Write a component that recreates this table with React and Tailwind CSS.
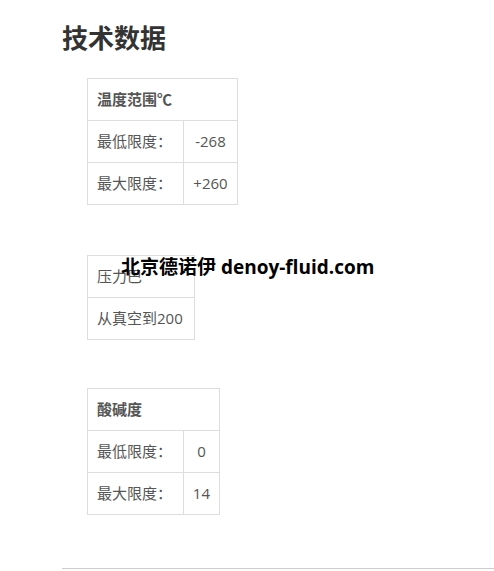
export default function App() {
  const cell = "border border-[#dddddd] h-[42px] px-[9px] text-[15px] text-[#555555] whitespace-nowrap";
  return (
    <div className="relative w-[494px] h-[571px] bg-white overflow-hidden font-['Open_Sans','Noto_Sans_CJK_SC',sans-serif]">
      <div className="pl-[62px] pt-[20px]">
        <h2 className="text-[26px] leading-[36px] font-bold text-[#333333]">技术数据</h2>
        <div className="ml-[25px] mt-[22px] flex flex-col">
          <table className="border-collapse w-[151px]">
            <tbody>
              <tr>
                <td colSpan={2} className={cell + " font-bold text-[#333333]"}>温度范围℃</td>
              </tr>
              <tr>
                <td className={cell + " w-[96px]"}>最低限度：</td>
                <td className={cell + " text-center px-0"}>-268</td>
              </tr>
              <tr>
                <td className={cell + " w-[96px]"}>最大限度：</td>
                <td className={cell + " text-center px-0"}>+260</td>
              </tr>
            </tbody>
          </table>
          <table className="border-collapse w-[108px] mt-[50px]">
            <tbody>
              <tr>
                <td className={cell + " text-[#444444]"}>压力巴</td>
              </tr>
              <tr>
                <td className={cell + " h-[41px]"}>从真空到200</td>
              </tr>
            </tbody>
          </table>
          <table className="border-collapse w-[133px] mt-[48px]">
            <tbody>
              <tr>
                <td colSpan={2} className={cell + " font-bold text-[#333333]"}>酸碱度</td>
              </tr>
              <tr>
                <td className={cell + " w-[96px]"}>最低限度：</td>
                <td className={cell + " text-center px-0"}>0</td>
              </tr>
              <tr>
                <td className={cell + " w-[96px]"}>最大限度：</td>
                <td className={cell + " text-center px-0"}>14</td>
              </tr>
            </tbody>
          </table>
        </div>
        <div className="mt-[53px] h-px bg-[#cccccc]"></div>
      </div>
      <div className="absolute left-[121px] top-[253px] text-[19px] leading-[28px] font-bold text-black whitespace-nowrap font-['Open_Sans','Noto_Sans_CJK_SC',sans-serif]">
        北京德诺伊 denoy-fluid.com
      </div>
    </div>
  );
}
